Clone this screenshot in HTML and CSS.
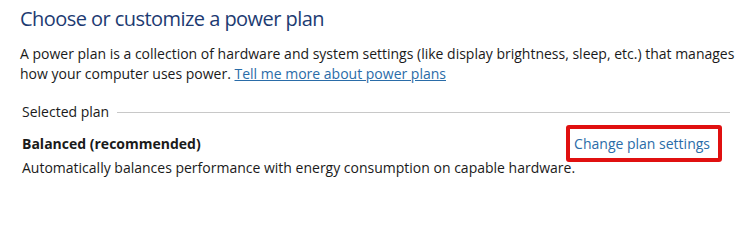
FILE: index.html
```html
<!DOCTYPE html>
<html>
<head>
<meta charset="utf-8">
<link rel="stylesheet" href="styles.css">
</head>
<body>
<div class="page">
  <h1 class="title">Choose or customize a power plan</h1>
  <p class="desc">A power plan is a collection of hardware and system settings (like display brightness, sleep, etc.) that manages how your computer uses power. <a class="link" href="#">Tell me more about power plans</a></p>
  <div class="group">
    <div class="group-head"><span class="group-label">Selected plan</span><span class="rule"></span></div>
    <div class="plan">
      <div class="plan-name">Balanced (recommended)</div>
      <a class="change" href="#">Change plan settings</a>
      <div class="plan-desc">Automatically balances performance with energy consumption on capable hardware.</div>
    </div>
  </div>
</div>
</body>
</html>
```
FILE: styles.css
```css
html, body {
  margin: 0;
  padding: 0;
  background: #ffffff;
}
body {
  font-family: "Open Sans", "Noto Sans", sans-serif;
  color: #1a1a1a;
  width: 750px;
  height: 204px;
  overflow: hidden;
}
.page {
  padding: 5px 20px 0 20px;
}
.title {
  margin: 0;
  font-size: 20px;
  font-weight: 400;
  color: #1d3b72;
  line-height: 28px;
  letter-spacing: -0.55px;
}
.desc {
  margin: 11px -10px 0 0;
  font-size: 14px;
  line-height: 20px;
}
.link {
  color: #2a6ca8;
  text-decoration: underline;
}
.group {
  margin-top: 18px;
  padding-left: 2px;
}
.group-head {
  display: flex;
  align-items: center;
  gap: 8px;
  font-size: 14px;
  line-height: 20px;
}
.rule {
  flex: 1;
  height: 1px;
  background: #c8c8c8;
}
.plan {
  display: grid;
  grid-template-columns: 1fr auto;
  margin-top: 12px;
  font-size: 14px;
}
.plan-name {
  font-weight: 700;
  line-height: 20px;
}
.plan-desc {
  grid-column: 1 / 3;
  line-height: 20px;
  margin-top: 4px;
}
.change {
  align-self: start;
  margin: -9px 8px -8px 0;
  border: 4px solid #e01010;
  border-radius: 3px;
  padding: 5px 8px 4px 4px;
  color: #2a6ca8;
  text-decoration: none;
  line-height: 20px;
  white-space: nowrap;
}
```
